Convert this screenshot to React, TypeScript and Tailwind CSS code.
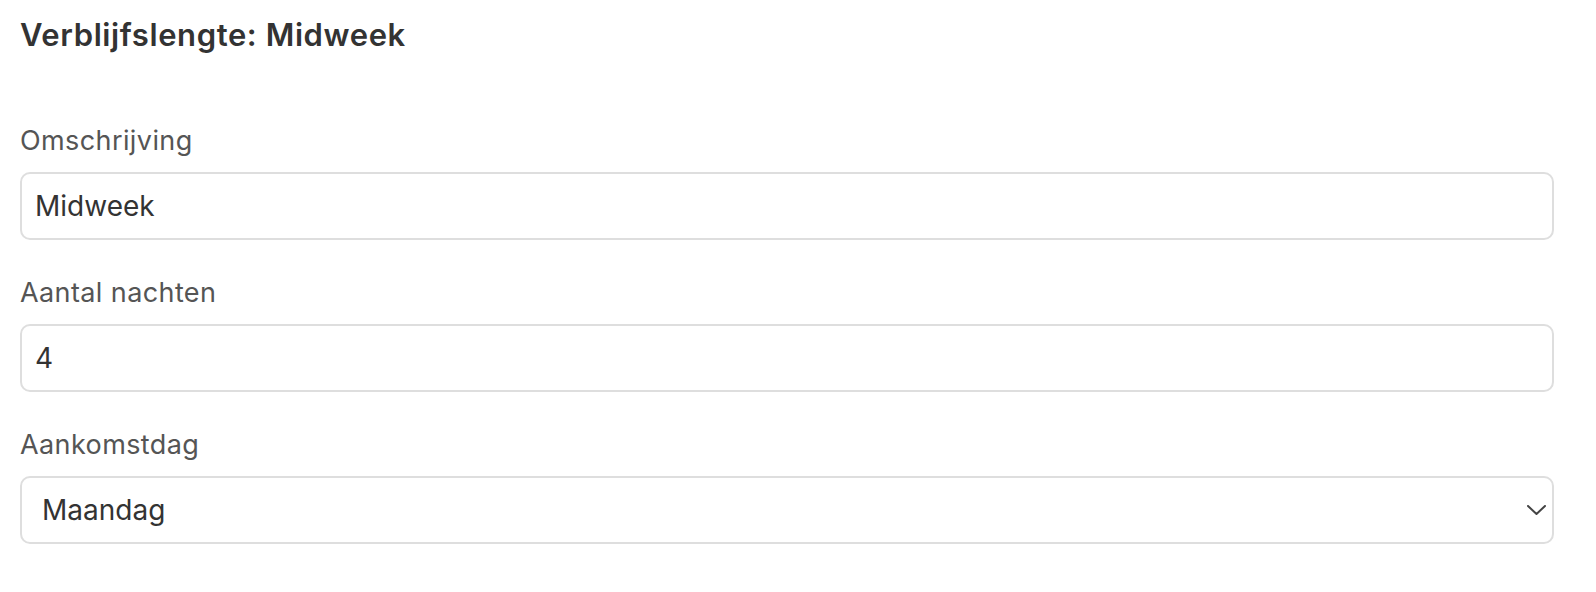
import React from "react";

function Field({ label, children }: { label: string; children: React.ReactNode }) {
  return (
    <div className="mb-[35px] flex flex-col">
      <label className="mb-[13px] text-[27px] leading-[36px] tracking-[0.4px] text-[#555555]">{label}</label>
      {children}
    </div>
  );
}

export default function App() {
  return (
    <div
      className="min-h-[592px] w-[1596px] bg-white pl-[20px] pt-[17px]"
      style={{ fontFamily: "Inter, 'Noto Sans', sans-serif" }}
    >
      <div className="w-[1534px]">
        <h2 className="mb-[70px] text-[31px] font-semibold leading-[36px] tracking-[0.6px] text-[#333333]">
          Verblijfslengte: Midweek
        </h2>
        <Field label="Omschrijving">
          <div className="flex h-[68px] items-center rounded-[10px] border-2 border-[#dedede] px-[13px] text-[28px] text-[#333333]">
            Midweek
          </div>
        </Field>
        <Field label="Aantal nachten">
          <div className="flex h-[68px] items-center rounded-[10px] border-2 border-[#dedede] px-[13px] text-[28px] text-[#333333]">
            4
          </div>
        </Field>
        <Field label="Aankomstdag">
          <div className="flex h-[68px] items-center justify-between rounded-[10px] border-2 border-[#dedede] pl-[20px] pr-[6px] text-[28px] text-[#333333]">
            <span>Maandag</span>
            <svg width="19" height="10" viewBox="0 0 19 10" fill="none">
              <polyline points="1,1 9.5,9 18,1" stroke="#444444" strokeWidth="2" strokeLinecap="round" strokeLinejoin="round" />
            </svg>
          </div>
        </Field>
      </div>
    </div>
  );
}
